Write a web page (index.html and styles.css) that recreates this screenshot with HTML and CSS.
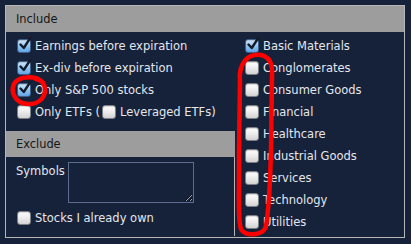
FILE: index.html
```html
<!DOCTYPE html>
<html lang="en">
<head>
    <meta charset="UTF-8">
    <meta name="viewport" content="width=device-width, initial-scale=1.0">
    <title>Screener Filters</title>
    <link rel="stylesheet" href="styles.css">
</head>
<body>
    <div class="panel">
        <div class="section-head">Include</div>
        <div class="panel-body">
            <div class="left-col">
                <div class="rows">
                    <div class="row"><span class="cb on"><svg viewBox="0 0 14 14"><path d="M2.5 7.5 L5.8 11 L12.5 0.5"/></svg></span>Earnings before expiration</div>
                    <div class="row"><span class="cb on"><svg viewBox="0 0 14 14"><path d="M2.5 7.5 L5.8 11 L12.5 0.5"/></svg></span>Ex-div before expiration</div>
                    <div class="row"><span class="cb on"><svg viewBox="0 0 14 14"><path d="M2.5 7.5 L5.8 11 L12.5 0.5"/></svg></span>Only S&amp;P 500 stocks</div>
                    <div class="row"><span class="cb"></span>Only ETFs (<span class="cb inner"></span>Leveraged ETFs)</div>
                </div>
                <div class="section-head exclude">Exclude</div>
                <div class="exclude-body">
                    <div class="symbols">
                        <span class="sym-label">Symbols</span>
                        <textarea class="sym-box"></textarea>
                    </div>
                    <div class="row"><span class="cb"></span>Stocks I already own</div>
                </div>
            </div>
            <div class="right-col">
                <div class="row"><span class="cb on"><svg viewBox="0 0 14 14"><path d="M2.5 7.5 L5.8 11 L12.5 0.5"/></svg></span>Basic Materials</div>
                <div class="row"><span class="cb"></span>Conglomerates</div>
                <div class="row"><span class="cb"></span>Consumer Goods</div>
                <div class="row"><span class="cb"></span>Financial</div>
                <div class="row"><span class="cb"></span>Healthcare</div>
                <div class="row"><span class="cb"></span>Industrial Goods</div>
                <div class="row"><span class="cb"></span>Services</div>
                <div class="row"><span class="cb"></span>Technology</div>
                <div class="row"><span class="cb"></span>Utilities</div>
            </div>
        </div>
    </div>

    <!-- red hand-drawn marks on top of the screenshot -->
    <svg class="marks" width="411" height="244" viewBox="0 0 411 244">
        <path d="M40 80 C34 76, 18 76, 14 84 C10 93, 16 103, 27 104 C38 105, 45 98, 45 90 C45 84, 42 80, 36 79"/>
        <path d="M240 82 C238 62, 249 53, 261 55 C270 57, 273 64, 272 76 L271 150 C270 190, 268 214, 266 226 C264 236, 245 237, 241 229 C238 220, 239 200, 239 150 Z"/>
    </svg>
</body>
</html>
```

FILE: styles.css
```css
body {
    margin: 0;
    background-color: #16223a;
    font-family: "DejaVu Sans", "Lucida Grande", sans-serif;
    font-size: 11.5px;
    color: #e4e7ed;
    width: 411px;
    height: 244px;
    position: relative;
    overflow: hidden;
}
.panel {
    margin: 5px 0 0 5px;
    width: 398px;
    height: 231px;
    border: 1px solid #b6b6b6;
    overflow: hidden;
}
.section-head {
    height: 26px;
    line-height: 26px;
    padding-left: 10px;
    background-color: #9d9d9d;
    color: #151515;
    font-size: 11.4px;
}
.panel-body {
    display: flex;
}
.left-col {
    width: 229px;
}
.rows {
    padding: 3px 0 0 11px;
}
.row {
    display: flex;
    align-items: center;
    height: 22px;
    white-space: nowrap;
}
.cb {
    flex: none;
    position: relative;
    width: 12px;
    height: 12px;
    margin-right: 4px;
    border: 1px solid #7c7f86;
    border-radius: 3px;
    background: linear-gradient(#ffffff, #e9e9e9 55%, #d2d2d2);
    box-shadow: inset 0 1px 1px rgba(0, 0, 0, 0.15);
}
.cb.inner {
    margin-left: 2px;
}
.cb.on {
    border-color: #3d5f8a;
    background: linear-gradient(#d3e8fb, #94c6f2 50%, #5fa5e6);
}
.cb svg {
    position: absolute;
    left: 0;
    top: -3px;
    width: 14px;
    height: 14px;
}
.cb svg path {
    fill: none;
    stroke: #141c2a;
    stroke-width: 2.4;
    stroke-linecap: round;
    stroke-linejoin: round;
}
.section-head.exclude {
    margin-top: 8px;
}
.exclude-body {
    height: 74px;
    padding: 5px 0 0 11px;
    border-right: 1px solid #b6b6b6;
}
.symbols {
    display: flex;
    align-items: flex-start;
    height: 41px;
    margin-left: -1px;
    margin-bottom: 4px;
}
.sym-label {
    width: 52px;
    padding-top: 2px;
}
.sym-box {
    box-sizing: border-box;
    width: 126px;
    height: 41px;
    margin: 0;
    padding: 2px;
    border: 1px solid #5b6c8e;
    background-color: #16223a;
    color: #e4e7ed;
    resize: both;
    outline: none;
}
.right-col {
    padding: 3px 0 0 10px;
}
.marks {
    position: absolute;
    left: 0;
    top: 0;
    pointer-events: none;
}
.marks path {
    fill: none;
    stroke: #ff0000;
    stroke-width: 4.5;
    stroke-linecap: round;
    stroke-linejoin: round;
}
```
